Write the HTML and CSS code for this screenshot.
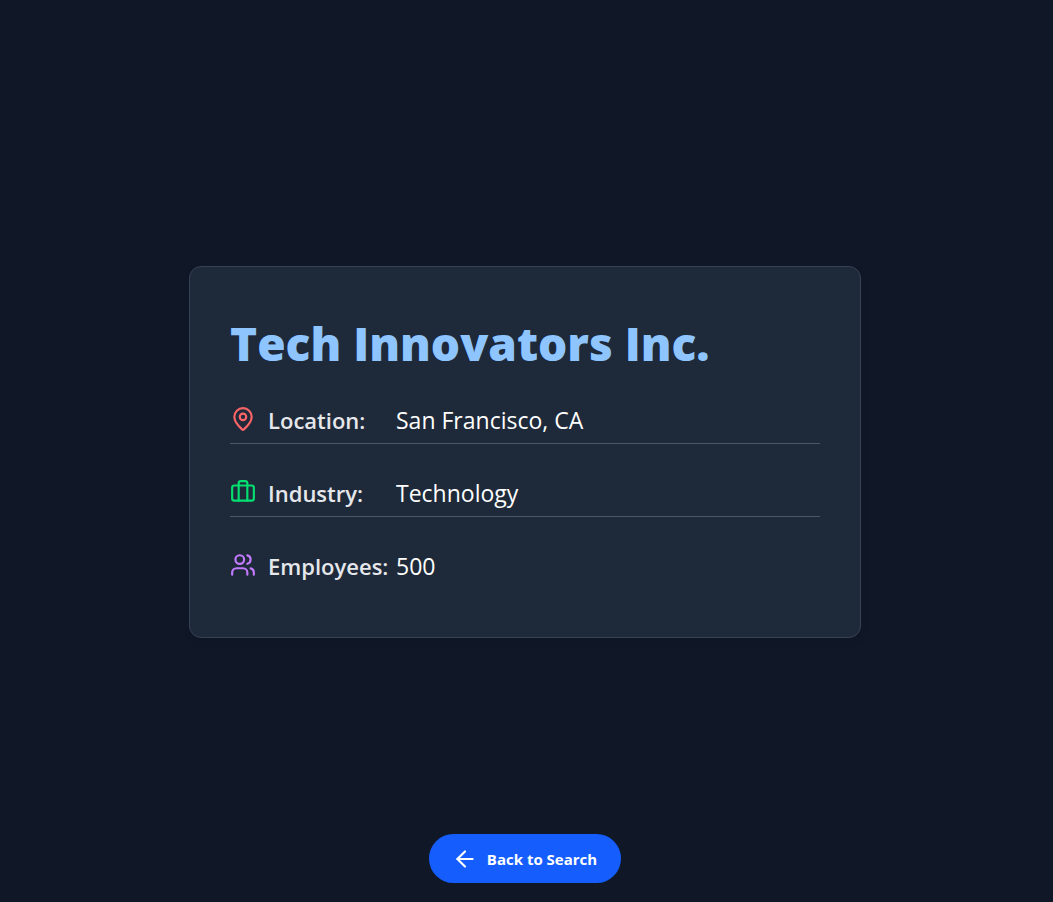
FILE: index.html
```html
<!DOCTYPE html>
<html lang="en">
<head>
<meta charset="utf-8">
<meta name="viewport" content="width=device-width, initial-scale=1">
<title>Tech Innovators Inc.</title>
<link rel="stylesheet" href="styles.css">
</head>
<body>
<main class="page">
  <article class="card">
    <h1 class="title">Tech Innovators Inc.</h1>
    <dl class="details">
      <div class="row">
        <dt class="label">
          <svg class="icon icon-red" viewBox="0 0 24 24" aria-hidden="true"><path d="M20 10c0 4.993-5.539 10.193-7.399 11.799a1 1 0 0 1-1.202 0C9.539 20.193 4 14.993 4 10a8 8 0 0 1 16 0"/><circle cx="12" cy="10" r="3"/></svg>
          Location:
        </dt>
        <dd class="value">San Francisco, CA</dd>
      </div>
      <div class="row">
        <dt class="label">
          <svg class="icon icon-green" viewBox="0 0 24 24" aria-hidden="true"><rect x="2" y="6" width="20" height="14" rx="2"/><path d="M16 20V4a2 2 0 0 0-2-2h-4a2 2 0 0 0-2 2v16"/></svg>
          Industry:
        </dt>
        <dd class="value">Technology</dd>
      </div>
      <div class="row">
        <dt class="label">
          <svg class="icon icon-purple" viewBox="0 0 24 24" aria-hidden="true"><path d="M16 21v-2a4 4 0 0 0-4-4H6a4 4 0 0 0-4 4v2"/><circle cx="9" cy="7" r="4"/><path d="M22 21v-2a4 4 0 0 0-3-3.870"/><path d="M16 3.130a4 4 0 0 1 0 7.750"/></svg>
          Employees:
        </dt>
        <dd class="value">500</dd>
      </div>
    </dl>
  </article>
  <button class="back" type="button">
    <svg class="icon" viewBox="0 0 24 24" aria-hidden="true"><path d="M19 12H5"/><path d="m12 19-7-7 7-7"/></svg>
    Back to Search
  </button>
</main>
</body>
</html>
```
FILE: styles.css
```css
* { box-sizing: border-box; }

body {
  margin: 0;
  background: #101828;
  color: #fff;
  font-family: "Segoe UI", "Open Sans", sans-serif;
}

.page {
  min-height: 100vh;
  display: grid;
  grid-template-rows: 1fr auto 1fr;
  justify-items: center;
  padding: 21px 19px 19px 16px;
}

.card {
  grid-row: 2;
  width: 100%;
  max-width: 672px;
  padding: 40px;
  background: #1e2939;
  border: 1px solid #364153;
  border-radius: 12px;
  box-shadow: 0 4px 6px rgba(0, 0, 0, 0.1);
}

.title {
  margin: 0 0 24px;
  color: #8ec5ff;
  font-size: 46px;
  font-weight: 900;
  line-height: 72px;
}

.details {
  display: grid;
  gap: 32px;
  margin: 0;
  padding-bottom: 8px;
  font-size: 23px;
  line-height: 34px;
}

.row {
  display: flex;
  align-items: center;
  padding-bottom: 6px;
  border-bottom: 1px solid #4a5565;
}

.row:last-child { border-bottom: 0; }

.label {
  display: flex;
  align-items: center;
  gap: 12px;
  width: 166px;
  color: #e5e7eb;
  font-size: 22px;
  font-weight: 600;
  white-space: nowrap;
}

.label .icon { margin-bottom: 2px; }

.value { margin: 0; }

.icon {
  flex: none;
  width: 26px;
  height: 26px;
  fill: none;
  stroke: currentColor;
  stroke-width: 2;
  stroke-linecap: round;
  stroke-linejoin: round;
}

.icon-red { color: #ff6467; }
.icon-green { color: #05df72; }
.icon-purple { color: #c27aff; }

.back {
  grid-row: 3;
  align-self: end;
  display: flex;
  align-items: center;
  gap: 9px;
  height: 49px;
  padding: 0 24px 0 23px;
  border: 0;
  border-radius: 25px;
  background: #155dfc;
  color: #fff;
  font: 700 15px/24px "Segoe UI", "Open Sans", sans-serif;
  cursor: pointer;
}
```
